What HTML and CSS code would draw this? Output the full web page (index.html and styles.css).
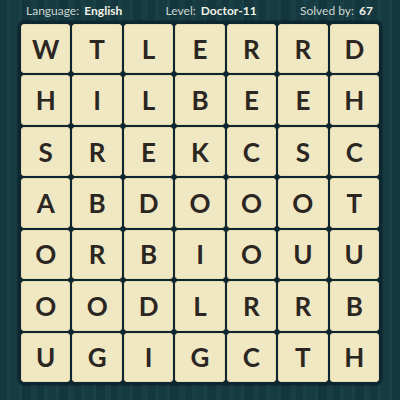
FILE: index.html
```html
<!DOCTYPE html>
<html>
<head>
<meta charset="utf-8">
<link rel="stylesheet" href="styles.css">
</head>
<body>
<div class="page">
  <div class="header">
    <span class="item">Language: <b>English</b></span>
    <span class="item">Level: <b>Doctor-11</b></span>
    <span class="item">Solved by: <b>67</b></span>
  </div>
  <div class="board">
    <div class="tile">W</div><div class="tile">T</div><div class="tile">L</div><div class="tile">E</div><div class="tile">R</div><div class="tile">R</div><div class="tile">D</div>
    <div class="tile">H</div><div class="tile">I</div><div class="tile">L</div><div class="tile">B</div><div class="tile">E</div><div class="tile">E</div><div class="tile">H</div>
    <div class="tile">S</div><div class="tile">R</div><div class="tile">E</div><div class="tile">K</div><div class="tile">C</div><div class="tile">S</div><div class="tile">C</div>
    <div class="tile">A</div><div class="tile">B</div><div class="tile">D</div><div class="tile">O</div><div class="tile">O</div><div class="tile">O</div><div class="tile">T</div>
    <div class="tile">O</div><div class="tile">R</div><div class="tile">B</div><div class="tile">I</div><div class="tile">O</div><div class="tile">U</div><div class="tile">U</div>
    <div class="tile">O</div><div class="tile">O</div><div class="tile">D</div><div class="tile">L</div><div class="tile">R</div><div class="tile">R</div><div class="tile">B</div>
    <div class="tile">U</div><div class="tile">G</div><div class="tile">I</div><div class="tile">G</div><div class="tile">C</div><div class="tile">T</div><div class="tile">H</div>
  </div>
</div>
</body>
</html>
```
FILE: styles.css
```css
html, body {
  margin: 0;
  padding: 0;
}
body {
  width: 400px;
  height: 400px;
  overflow: hidden;
  background-color: #163a40;
  background-image: repeating-linear-gradient(90deg,
    #153840 0px, #153840 7px,
    #1a4047 7px, #1a4047 11px,
    #163b41 11px, #163b41 19px,
    #1b4148 19px, #1b4148 22px,
    #14363d 22px, #14363d 31px,
    #193f45 31px, #193f45 37px);
  font-family: Lato, "Open Sans", sans-serif;
}
.page {
  display: flex;
  flex-direction: column;
}
.header {
  height: 21px;
  line-height: 21px;
  display: flex;
  justify-content: space-between;
  padding: 0 27px 0 26px;
  font-size: 12px;
  color: #cdd5cf;
}
.header b {
  font-weight: 700;
  color: #f3f2e8;
  margin-left: 2px;
}
.board {
  margin-left: 18px;
  width: 358px;
  height: 358px;
  padding: 3px;
  background: #0e2630;
  border-radius: 6px;
  display: grid;
  grid-template-columns: repeat(7, 1fr);
  grid-template-rows: repeat(7, 1fr);
  gap: 2px;
  box-shadow: 0 0 2px rgba(5, 20, 25, 0.8);
}
.tile {
  background: #f0e8c3;
  border-radius: 4px;
  display: flex;
  align-items: center;
  justify-content: center;
  font-size: 26px;
  font-weight: 700;
  color: #2b2622;
  box-shadow: inset 0 0 0 1px #e6dcb2;
}
```
